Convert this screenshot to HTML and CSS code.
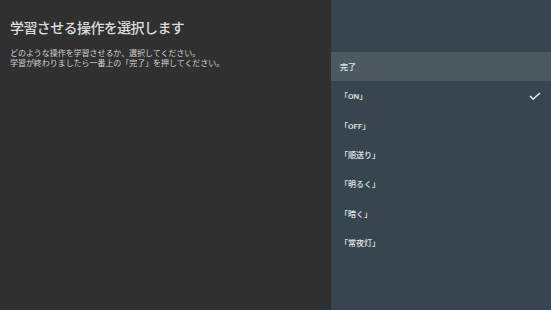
FILE: index.html
```html
<!DOCTYPE html>
<html lang="ja"><head>
<meta charset="utf-8">
<link rel="stylesheet" href="styles.css">
</head><body>
<div class="screen">
	<div class="guide">
		<div class="headline">学習させる操作を選択します</div>
		<p class="note">どのような操作を学習させるか、選択してください。<br>学習が終わりましたら一番上の「完了」を押してください。</p>
	</div>
	<div class="panel">
		<ul class="menu">
			<li class="item done">完了</li>
			<li class="item checked">「ON」
				<svg class="check" viewBox="0 0 12 8" width="12" height="8"><path d="M1 4.2 L4.2 7 L11 1" fill="none" stroke="#e4e8ea" stroke-width="1.6"/></svg>
			</li>
			<li class="item">「OFF」</li>
			<li class="item">「順送り」</li>
			<li class="item">「明るく」</li>
			<li class="item">「暗く」</li>
			<li class="item">「常夜灯」</li>
		</ul>
	</div>
</div>
</body></html>
```

FILE: styles.css
```css
html, body {margin: 0; padding: 0;}
body {background: #303030; font-family: "Roboto", "Noto Sans CJK JP", sans-serif; color: #d6d6d6;}
.screen {display: flex; width: 551px; height: 310px; overflow: hidden;}
.guide {width: 330px; padding: 0 0 0 10px; box-sizing: border-box;}
.guide .headline {font-size: 14px; line-height: 20px; margin-top: 18px; letter-spacing: -0.6px; font-weight: 500; color: #dcdcdc;}
.guide .note {margin: 11px 0 0 0; font-size: 8px; line-height: 10px; letter-spacing: -0.05px; color: #d2d2d2;}
.panel {flex: 1; background: #37464e; border-left: 1px solid #2a3338; padding-top: 52px;}
.menu {list-style: none; margin: 0; padding: 0;}
.menu .item {display: flex; align-items: center; height: 29.3px; padding-left: 9px; font-size: 8px; font-weight: 500; color: #e2e6e8;}
.menu .done {background: #4b5a60;}
.menu .check {margin-left: auto; margin-right: 10px;}
```
